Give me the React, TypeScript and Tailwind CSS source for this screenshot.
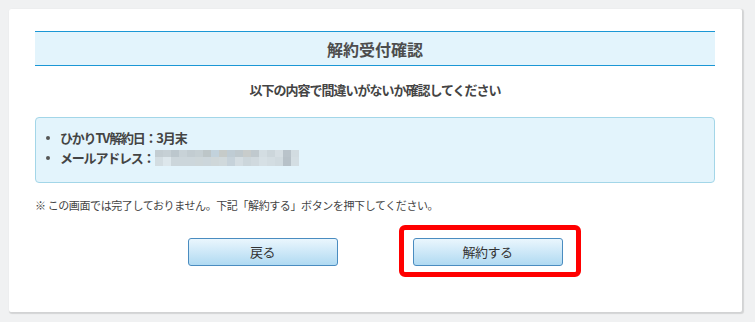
import React from "react";

const row1 = ["#c3cdd2","#c6d0d5","#bcc7cd","#c8d2d7","#c2ccd1","#c5cfd3","#bdc6c8","#c2d2dc","#c6cbc9","#bfccd4","#bfc9ce","#c8cccb","#c0c9ce","#d3dde2","#ccd6db","#d5dee3","#b9c3ca","#d2dce1"];
const row2 = ["#d3dde2","#dde7ec","#ccd6db","#ccd6db","#ccd6db","#cdd6d9","#ccd6db","#cfd7d9","#d0d9dc","#c6d2da","#d4dde2","#ccd6db","#d0d9de","#d6e0e5","#d3dde2","#d0dadf","#b7c1c8","#d4dee3"];

export default function App() {
  return (
    <div
      className="w-[755px] h-[322px] bg-[#f0f1f2] pt-[9px] pl-[9px] overflow-hidden"
      style={{ fontFamily: '"Noto Sans CJK JP", "Noto Sans", sans-serif' }}
    >
      <div className="w-[733px] h-[303px] bg-white rounded-[2px] shadow-[1px_1px_1px_1px_rgba(0,0,0,0.12)] pt-[22px] pl-[26px] pr-[27px] flex flex-col">
        <div className="h-[35px] border-y border-[#1b97d5] bg-[#e3f4fc] flex items-center justify-center">
          <span className="text-[16px] font-bold text-[#4d4d4d] leading-none">解約受付確認</span>
        </div>
        <div className="mt-[14px] h-[20px] leading-[20px] text-center text-[13px] font-bold text-[#444] tracking-[-1px]">
          以下の内容で間違いがないか確認してください
        </div>
        <div className="mt-[17px] h-[66px] border border-[#a3d6e8] rounded-[4px] bg-[#e3f4fc] pt-[10px] pl-[9px]">
          <div className="flex items-center h-[20px] text-[13px] font-bold text-[#444] tracking-[-1.2px]">
            <span className="w-[4px] h-[4px] rounded-full bg-[#555] mr-[10px] ml-[1px]" />
            <span>ひかりTV解約日：3月末</span>
          </div>
          <div className="flex items-center h-[20px] text-[13px] font-bold text-[#444] tracking-[-1.2px]">
            <span className="w-[4px] h-[4px] rounded-full bg-[#555] mr-[10px] ml-[1px]" />
            <span>メールアドレス：</span>
            <div className="ml-[1px] flex flex-col">
              <div className="flex">
                {row1.map((c, i) => (
                  <span key={i} className="w-[8px] h-[7px]" style={{ backgroundColor: c }} />
                ))}
              </div>
              <div className="flex">
                {row2.map((c, i) => (
                  <span key={i} className="w-[8px] h-[9px]" style={{ backgroundColor: c }} />
                ))}
              </div>
            </div>
          </div>
        </div>
        <div className="mt-[14px] h-[16px] leading-[16px] text-[11px] text-[#444] tracking-[-0.4px]">
          ※ この画面では完了しておりません。下記「解約する」ボタンを押下してください。
        </div>
        <div className="mt-[25px] flex justify-center gap-[75px]">
          <button className="w-[150px] h-[28px] rounded-[3px] border border-[#4a8cc0] bg-gradient-to-b from-[#eaf6fd] to-[#b0daf2] text-[13px] text-[#333] tracking-[-0.5px]">
            戻る
          </button>
          <div className="relative">
            <div className="absolute left-[-14px] top-[-13px] right-[-18px] bottom-[-11px] border-[5px] border-[#ff0000] rounded-[6px]" />
            <button className="w-[150px] h-[28px] rounded-[3px] border border-[#4a8cc0] bg-gradient-to-b from-[#eaf6fd] to-[#b0daf2] text-[13px] text-[#333] tracking-[-0.5px]">
              解約する
            </button>
          </div>
        </div>
      </div>
    </div>
  );
}
